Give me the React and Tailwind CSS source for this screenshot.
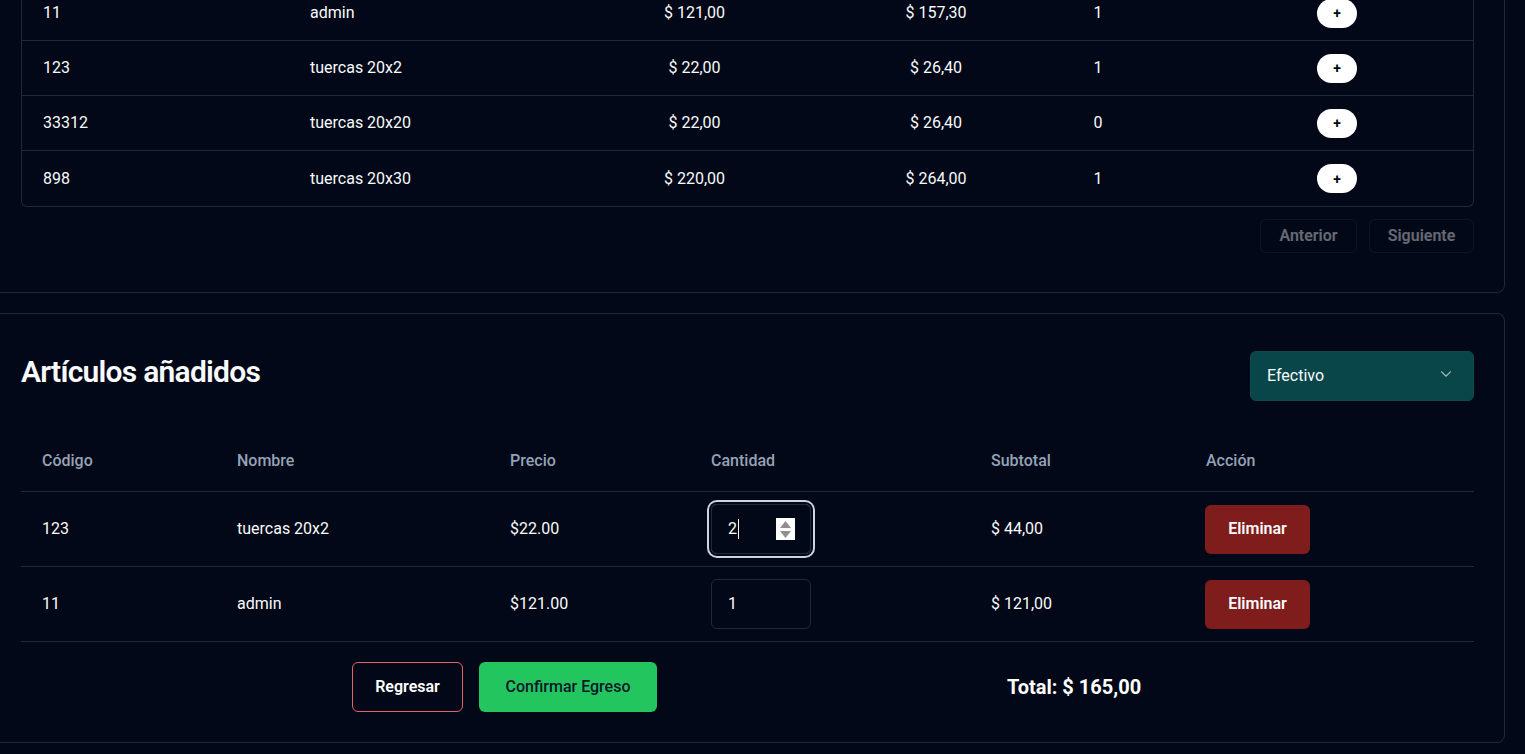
import React from 'react';
import { ChevronDown } from 'lucide-react';

const productos = [
  { codigo: '11', nombre: 'admin', precio: '$ 121,00', costo: '$ 157,30', stock: '1' },
  { codigo: '123', nombre: 'tuercas 20x2', precio: '$ 22,00', costo: '$ 26,40', stock: '1' },
  { codigo: '33312', nombre: 'tuercas 20x20', precio: '$ 22,00', costo: '$ 26,40', stock: '0' },
  { codigo: '898', nombre: 'tuercas 20x30', precio: '$ 220,00', costo: '$ 264,00', stock: '1' },
];

const añadidos = [
  { codigo: '123', nombre: 'tuercas 20x2', precio: '$22.00', cantidad: '2', subtotal: '$ 44,00', focused: true },
  { codigo: '11', nombre: 'admin', precio: '$121.00', cantidad: '1', subtotal: '$ 121,00' },
];

function Spinner() {
  return (
    <div className="flex h-[22px] w-[19px] flex-col items-center justify-center gap-[3px] bg-white">
      <svg width="11" height="7" viewBox="0 0 11 7"><path d="M5.5 0 L11 7 L0 7 Z" fill="#8f8f8f" /></svg>
      <svg width="11" height="7" viewBox="0 0 11 7"><path d="M0 0 L11 0 L5.5 7 Z" fill="#8f8f8f" /></svg>
    </div>
  );
}

function QtyInput({ value, focused }) {
  if (focused) {
    return (
      <div className="flex h-[50px] w-[100px] items-center rounded-md border border-[#1e293b] pl-4 pr-[15px] ring-2 ring-[#cbd5e1] ring-offset-2 ring-offset-[#020817]">
        <span>{value}</span>
        <span className="ml-[1px] h-[20px] w-px bg-white" />
        <div className="ml-auto"><Spinner /></div>
      </div>
    );
  }
  return (
    <div className="flex h-[50px] w-[100px] items-center rounded-md border border-[#1e293b] px-4">
      {value}
    </div>
  );
}

export default function App() {
  return (
    <div className="h-[754px] overflow-hidden bg-[#020817] font-['Roboto',sans-serif] text-base text-[#f8fafc]">
      <div className="-mt-[14px] flex flex-col gap-5 pr-5">
        {/* productos disponibles */}
        <div className="rounded-br-lg border-r border-b border-[#1e293b] pl-[21px] pr-[30px] pb-[39px]">
          <div className="rounded-b-md border-x border-b border-[#1e293b]">
            {productos.map((p, i) => (
              <div
                key={p.codigo}
                className={`grid h-[55px] grid-cols-[268px_221px_367px_116px_208px_270px] items-center ${i < productos.length - 1 ? 'border-b border-[#1e293b]' : 'h-[54px]'}`}
              >
                <div className="pl-[21px]">{p.codigo}</div>
                <div className="pl-[20px]">{p.nombre}</div>
                <div className="text-center">{p.precio}</div>
                <div className="text-center">{p.costo}</div>
                <div className="text-center">{p.stock}</div>
                <div className="flex justify-center">
                  <button className="flex h-[29px] w-10 items-center justify-center rounded-full bg-white text-sm font-bold text-[#020817]">+</button>
                </div>
              </div>
            ))}
          </div>
          <div className="mt-3 flex justify-end gap-3">
            <button className="h-[34px] w-[97px] rounded-md border border-[#1e293b] font-semibold text-[#f8fafc] opacity-40">Anterior</button>
            <button className="h-[34px] w-[105px] rounded-md border border-[#1e293b] font-semibold text-[#f8fafc] opacity-40">Siguiente</button>
          </div>
        </div>

        {/* artículos añadidos */}
        <div className="rounded-r-lg border-y border-r border-[#1e293b] pl-[21px] pr-[30px] pt-[37px] pb-[30px]">
          <div className="flex h-[50px] items-center justify-between">
            <h2 className="mb-[9px] text-[30px] font-semibold tracking-tight">Artículos añadidos</h2>
            <div className="flex h-[50px] w-[224px] items-center justify-between rounded-md border border-[#0f4c50] bg-[#08464a] pl-4 pr-[18px]">
              <span>Efectivo</span>
              <ChevronDown size={18} className="-mt-[4px] text-[#9fb3b6]" strokeWidth={1.5} />
            </div>
          </div>

          <div className="mt-[30px]">
            <div className="grid h-[61px] grid-cols-[195px_273px_201px_280px_215px_288px] items-center border-b border-[#1e293b] font-medium text-[#94a3b8]">
              <div className="pl-[21px]">Código</div>
              <div className="pl-[21px]">Nombre</div>
              <div className="pl-[21px]">Precio</div>
              <div className="pl-[21px]">Cantidad</div>
              <div className="pl-[21px]">Subtotal</div>
              <div className="pl-[21px]">Acción</div>
            </div>
            {añadidos.map((a) => (
              <div key={a.codigo} className="grid h-[75px] grid-cols-[195px_273px_201px_280px_215px_288px] items-center border-b border-[#1e293b]">
                <div className="pl-[21px]">{a.codigo}</div>
                <div className="pl-[21px]">{a.nombre}</div>
                <div className="pl-[21px]">{a.precio}</div>
                <div className="pl-[21px]"><QtyInput value={a.cantidad} focused={a.focused} /></div>
                <div className="pl-[21px]">{a.subtotal}</div>
                <div className="pl-[20px]">
                  <button className="h-[49px] w-[105px] rounded-md bg-[#7f1d1d] font-semibold text-[#f8fafc]">Eliminar</button>
                </div>
              </div>
            ))}
          </div>

          <div className="mt-5 flex items-center">
            <div className="ml-[331px] flex gap-4">
              <button className="h-[50px] w-[111px] rounded-md border border-[#e06666] font-semibold text-white">Regresar</button>
              <button className="h-[50px] w-[178px] rounded-md bg-[#22c55e] font-medium text-[#0f172a]">Confirmar Egreso</button>
            </div>
            <div className="ml-[350px] text-xl font-bold text-white">Total: $ 165,00</div>
          </div>
        </div>
      </div>
    </div>
  );
}
